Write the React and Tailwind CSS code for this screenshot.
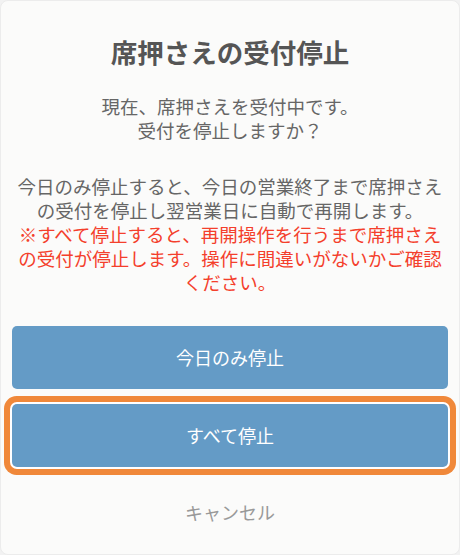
import React from 'react';

const App = () => {
  return (
    <div className="w-[460px] h-[555px] bg-[#f2f2f2]" style={{ fontFamily: '"Noto Sans CJK JP", "Noto Sans", sans-serif' }}>
      <div className="w-full h-full bg-[#fbfbfa] rounded-[8px] border border-[#ececec] flex flex-col items-center">
        <h1 className="mt-[33px] text-[26.5px] leading-[36px] font-bold text-[#555555]">席押さえの受付停止</h1>
        <p className="mt-[24px] text-[18.5px] leading-[24px] text-[#666666] text-center">
          現在、席押さえを受付中です。<br />受付を停止しますか？
        </p>
        <div className="mt-[32px] px-[14px] text-[18.5px] leading-[24px] text-center">
          <p className="text-[#666666]">今日のみ停止すると、今日の営業終了まで席押さえの受付を停止し翌営業日に自動で再開します。</p>
          <p className="text-[#f43f2c]">※すべて停止すると、再開操作を行うまで席押さえの受付が停止します。操作に間違いがないかご確認ください。</p>
        </div>
        <div className="mt-[32px] w-full px-[11px] flex flex-col gap-[15px]">
          <button className="h-[63px] w-full rounded-[5px] bg-[#649bc6] text-white text-[18px]">今日のみ停止</button>
          <button className="h-[63px] w-full rounded-[5px] bg-[#649bc6] text-white text-[18px] ring-[6px] ring-[#f0883a] ring-offset-[2px] ring-offset-white">すべて停止</button>
        </div>
        <button className="mt-[33px] text-[18px] leading-[24px] text-[#999999]">キャンセル</button>
      </div>
    </div>
  );
};

export default App;
